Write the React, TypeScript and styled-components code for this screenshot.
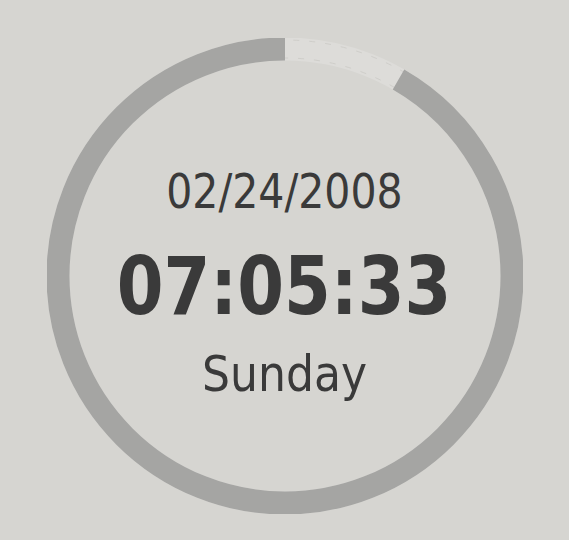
import React from 'react'
import styled, { createGlobalStyle } from 'styled-components'

const GlobalStyle = createGlobalStyle`
  html, body {
    margin: 0;
    padding: 0;
    background: #d6d5d1;
  }
  body {
    font-family: "DejaVu Sans Condensed", "DejaVu Sans", sans-serif;
  }
`

const Page = styled.div`
  width: 569px;
  height: 540px;
  display: flex;
  justify-content: center;
  align-items: flex-start;
  padding-top: 38px;
  box-sizing: border-box;
  background: #d6d5d1;
`

const Dial = styled.div`
  display: grid;
  width: 476px;
  height: 476px;

  & > * {
    grid-area: 1 / 1;
  }
`

const Ring = styled.svg`
  display: block;
  width: 476px;
  height: 476px;
`

const Readout = styled.div`
  display: flex;
  flex-direction: column;
  align-items: center;
  padding-top: 129px;
  color: #3a3a3a;
`

const DateLine = styled.div`
  font-size: 48px;
  line-height: 48px;
  font-weight: 400;
  transform: scaleX(0.95);
`

const TimeLine = styled.div`
  margin-top: 32px;
  font-size: 80px;
  line-height: 80px;
  font-weight: 700;
  transform: scaleX(0.935);
`

const DayLine = styled.div`
  margin-top: 23px;
  font-size: 49px;
  line-height: 49px;
  font-weight: 400;
`

const R = 227
const C = 2 * Math.PI * R
const elapsed = 30 / 360

export default function App() {
  return (
    <>
      <GlobalStyle />
      <Page>
        <Dial>
          <Ring viewBox="0 0 476 476">
            <circle cx="238" cy="238" r={R} fill="none" stroke="#dddcd9" strokeWidth="23" />
            <circle
              cx="238"
              cy="238"
              r={R + 9}
              fill="none"
              stroke="#cfceca"
              strokeWidth="1"
              strokeDasharray="6 10"
            />
            <circle
              cx="238"
              cy="238"
              r={R - 9}
              fill="none"
              stroke="#cfceca"
              strokeWidth="1"
              strokeDasharray="6 10"
            />
            <circle
              cx="238"
              cy="238"
              r={R}
              fill="none"
              stroke="#a5a5a3"
              strokeWidth="23"
              strokeDasharray={`${C * (1 - elapsed)} ${C}`}
              strokeDashoffset={-C * elapsed}
              transform="rotate(-90 238 238)"
            />
          </Ring>
          <Readout>
            <DateLine>02/24/2008</DateLine>
            <TimeLine>07:05:33</TimeLine>
            <DayLine>Sunday</DayLine>
          </Readout>
        </Dial>
      </Page>
    </>
  )
}
